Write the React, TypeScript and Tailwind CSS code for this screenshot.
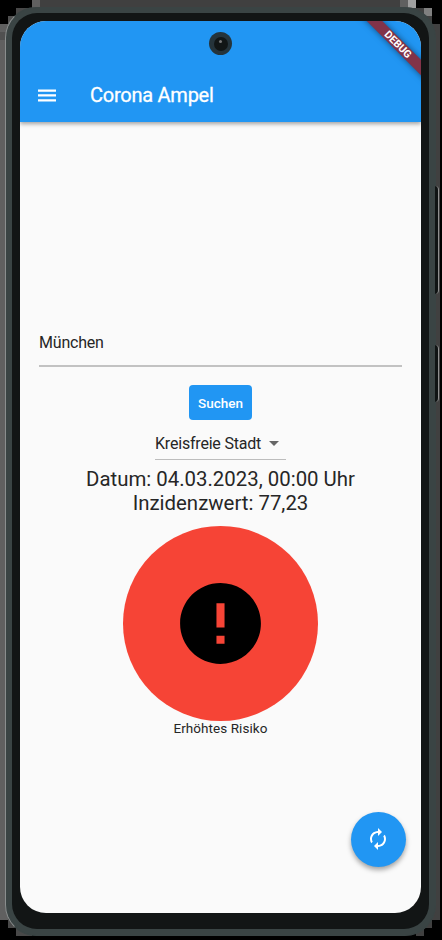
import React from 'react';

function Backdrop() {
  return (
    <svg className="absolute inset-0" width="442" height="940" shapeRendering="crispEdges">
      <rect width="442" height="940" fill="#000" />
      <rect x="0" y="24" width="8" height="896" fill="#606060" />
      <rect x="0" y="32" width="8" height="8" fill="#505050" />
      <rect x="8" y="16" width="16" height="16" fill="#505050" />
      <rect x="16" y="8" width="24" height="16" fill="#484848" />
      <rect x="32" y="0" width="8" height="8" fill="#606060" />
      <rect x="40" y="0" width="360" height="8" fill="#404040" />
      <rect x="400" y="0" width="8" height="8" fill="#606060" />
      <rect x="408" y="0" width="8" height="8" fill="#a0a0a0" />
      <rect x="408" y="8" width="16" height="8" fill="#404040" />
      <rect x="424" y="8" width="8" height="8" fill="#808080" />
      <rect x="424" y="16" width="8" height="8" fill="#404040" />
      <rect x="432" y="24" width="8" height="896" fill="#404040" />
      <rect x="8" y="912" width="8" height="16" fill="#484848" />
      <rect x="16" y="928" width="16" height="8" fill="#484848" />
      <rect x="424" y="920" width="8" height="8" fill="#404040" />
      <rect x="416" y="928" width="8" height="8" fill="#404040" />
    </svg>
  );
}

function SideButton({ className }: { className: string }) {
  return <div className={`absolute left-[435px] w-[4px] rounded-r-sm border-r border-[#909090] bg-[#101414] ${className}`} />;
}

export default function App() {
  return (
    <div className="relative h-[940px] w-[442px] overflow-hidden font-[Roboto,sans-serif]">
      <Backdrop />
      <div className="relative ml-[5px] h-[936px] w-[431px] pt-[7px]">
        <div className="h-[929px] rounded-[31px] border border-[#3a4444] border-l-[#8a8e8e] bg-[#3a4444] p-[6px] pt-[5px]">
          <div className="h-full rounded-[25px] bg-[#121515] px-[8px] pt-[8px] pb-[17px]">
            <div className="relative flex h-[892px] flex-col overflow-hidden rounded-[26px] bg-[#fafafa]">
              <header className="relative flex h-[101px] shrink-0 items-end bg-[#2196f3] pb-[15px] pl-[18px] text-white shadow-[0_2px_4px_rgba(0,0,0,0.35)]">
                <svg className="mb-[5px]" width="18" height="13" fill="#fff">
                  <path d="M0 .5h18v2.200H0zM0 5.300h18v2.200H0zM0 10.300h18v2.200H0z" />
                </svg>
                <h1 className="ml-[34px] text-[20px] leading-[24px] font-normal tracking-[-0.25px] [-webkit-text-stroke:0.3px_#fff]">Corona Ampel</h1>
              </header>
              <main className="flex flex-col items-center text-[#262626]">
                <div className="mt-[206px] h-[39px] w-[363px] border-b-2 border-[#c2c2c2] pt-[5px] text-[16px] leading-[20px] tracking-[-0.2px]">
                  München
                </div>
                <button className="mt-[18px] h-[35px] w-[63px] rounded-[4px] bg-[#2196f3] pt-[2px] text-[13.500px] font-medium text-white">Suchen</button>
                <div className="mt-[9px] flex h-[31px] w-[131px] border-b border-[#bdbdbd] pt-[5px] text-[16px] leading-[20px] tracking-[-0.2px]">
                  <span className="w-[106px] whitespace-nowrap">Kreisfreie Stadt</span>
                  <svg className="mt-[7px] ml-[8px]" width="10" height="6" fill="#666"><path d="M0 0h10L5 5z" /></svg>
                </div>
                <div className="mt-[7px] text-center text-[20.400px] leading-[24px]">
                  <p>Datum: 04.03.2023, 00:00 Uhr</p>
                  <p>Inzidenzwert: 77,23</p>
                </div>
                <div className="mt-[10.500px] mb-[-0.500px] flex h-[195px] w-[195px] items-center justify-center rounded-full bg-[#f64436]">
                  <svg width="97" height="97" viewBox="0 0 24 24"><path d="M12 2C6.480 2 2 6.480 2 12s4.480 10 10 10 10-4.480 10-10S17.520 2 12 2zm1 15h-2v-2h2v2zm0-4h-2V7h2v6z" /></svg>
                </div>
                <p className="text-[13.500px] leading-[16px] tracking-[0.06px]">Erhöhtes Risiko</p>
              </main>
              <button className="absolute top-[790.500px] left-[330.500px] flex h-[55px] w-[55px] items-center justify-center rounded-full bg-[#2196f3] shadow-[0_3px_5px_rgba(0,0,0,0.35)]">
                <svg width="24" height="24" viewBox="0 0 24 24" fill="#fff"><path d="M12 6v3l4-4-4-4v3c-4.420 0-8 3.580-8 8 0 1.570.46 3.030 1.240 4.260L6.700 14.800A5.870 5.870 0 0 1 6 12c0-3.310 2.690-6 6-6zm6.760 1.740L17.300 9.200c.44.84.7 1.790.7 2.800 0 3.310-2.690 6-6 6v-3l-4 4 4 4v-3c4.420 0 8-3.580 8-8 0-1.570-.46-3.030-1.240-4.260z" /></svg>
              </button>
              <div className="absolute top-[11px] left-[189px] flex h-[23px] w-[23px] items-center justify-center rounded-full bg-[#25343b]">
                <div className="flex h-[14px] w-[14px] justify-center rounded-full bg-[#111616] pt-[3px]"><div className="h-[3px] w-[3px] rounded-full bg-[#777]" /></div>
              </div>
              <div className="absolute top-[18px] left-[320px] flex h-[11px] w-[116px] rotate-45 items-center justify-center bg-[#823349] text-[10.500px] leading-[11px] font-bold text-white shadow-[0_0_6px_rgba(0,0,0,0.5)]">DEBUG</div>
            </div>
          </div>
        </div>
      </div>
      <SideButton className="top-[186px] h-[108px]" />
      <SideButton className="top-[345px] h-[57px]" />
    </div>
  );
}
